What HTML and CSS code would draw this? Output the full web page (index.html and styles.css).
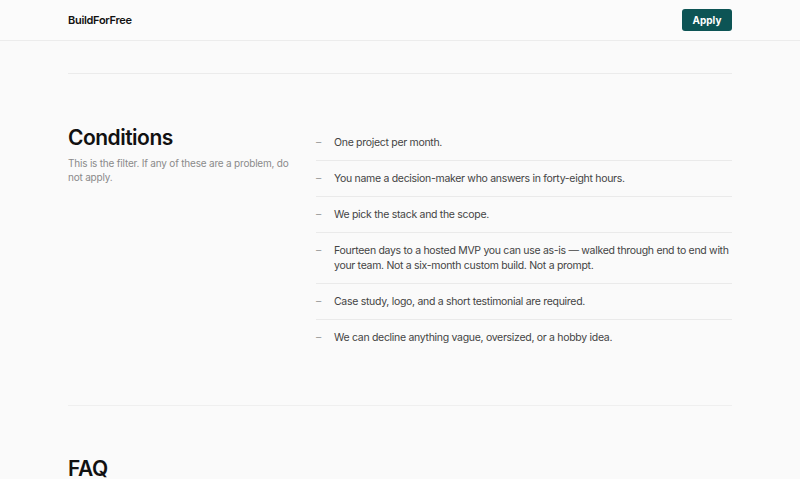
FILE: index.html
```html
<!doctype html>
<html lang="en">
<head>
	<meta charset="UTF-8">
	<title>BuildForFree</title>
	<link rel="stylesheet" href="styles.css">
</head>
<body>
	<header class="topbar">
		<div class="wrap topbar-inner">
			<a class="brand" href="#">BuildForFree</a>
			<a class="apply" href="#">Apply</a>
		</div>
	</header>

	<main class="wrap">
		<section class="conditions">
			<div class="intro">
				<h2>Conditions</h2>
				<p>This is the filter. If any of these are a problem, do not apply.</p>
			</div>
			<ul class="rules">
				<li><span class="dash">–</span><span>One project per month.</span></li>
				<li><span class="dash">–</span><span>You name a decision-maker who answers in forty-eight hours.</span></li>
				<li><span class="dash">–</span><span>We pick the stack and the scope.</span></li>
				<li><span class="dash">–</span><span>Fourteen days to a hosted MVP you can use as-is — walked through end to end with your team. Not a six-month custom build. Not a prompt.</span></li>
				<li><span class="dash">–</span><span>Case study, logo, and a short testimonial are required.</span></li>
				<li><span class="dash">–</span><span>We can decline anything vague, oversized, or a hobby idea.</span></li>
			</ul>
		</section>

		<section class="faq">
			<h2>FAQ</h2>
		</section>
	</main>
</body>
</html>
```

FILE: styles.css
```css
*{
	box-sizing: border-box;
}
body{
	margin: 0;
	background: #fafafa;
	color: #111;
	font-family: Inter, "Liberation Sans", sans-serif;
}
.wrap{
	width: 664px;
	margin: 0 auto;
}
.topbar{
	height: 41px;
	border-bottom: 1px solid #ececec;
	background: #fbfbfb;
}
.topbar-inner{
	height: 40px;
	display: flex;
	align-items: center;
	justify-content: space-between;
}
.brand{
	font-size: 11px;
	font-weight: 600;
	letter-spacing: -0.3px;
	color: #111;
	text-decoration: none;
}
.apply{
	display: block;
	width: 50px;
	height: 22px;
	line-height: 22px;
	text-align: center;
	background: #0d5455;
	color: #fff;
	font-size: 10px;
	font-weight: 700;
	border-radius: 3px;
	text-decoration: none;
}
.conditions{
	margin-top: 32px;
	border-top: 1px solid #ebebeb;
	padding: 51px 0 50px;
	display: grid;
	grid-template-columns: 232px 1fr;
	gap: 16px;
	border-bottom: 1px solid #efefef;
}
.intro h2{
	margin: 0;
	font-size: 21px;
	font-weight: 600;
	letter-spacing: -0.5px;
	line-height: 26px;
}
.intro p{
	margin: 5px 0 0;
	font-size: 10px;
	line-height: 14px;
	letter-spacing: -0.2px;
	color: #8a8a8a;
}
.rules{
	list-style: none;
	margin: 0;
	padding: 0;
}
.rules li{
	display: flex;
	font-size: 10.5px;
	line-height: 15px;
	letter-spacing: -0.3px;
	color: #444;
	padding: 10px 0;
	border-bottom: 1px solid #eaeaea;
}
.rules li:last-child{
	border-bottom: none;
}
.dash{
	width: 18px;
	flex-shrink: 0;
	color: #999;
}
.faq{
	padding-top: 50px;
}
.faq h2{
	margin: 0;
	font-size: 21px;
	line-height: 26px;
	font-weight: 600;
	letter-spacing: -0.5px;
}
```
